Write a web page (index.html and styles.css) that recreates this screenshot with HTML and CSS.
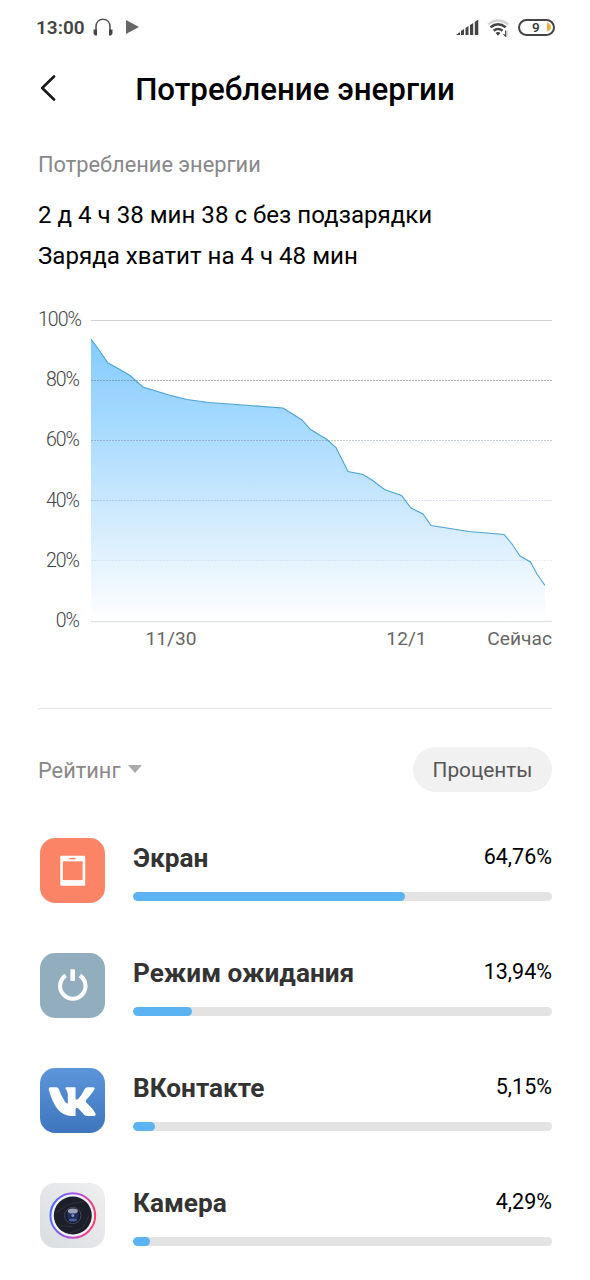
FILE: index.html
```html
<!DOCTYPE html>
<html lang="ru">
<head>
    <meta charset="UTF-8">
    <title>Потребление энергии</title>
    <link rel="stylesheet" href="styles.css">
</head>
<body>
    <div class="status-bar">
        <span class="clock">13:00</span>
        <svg class="headphones" width="20" height="18" viewBox="0 0 20 18">
            <path d="M3 15V9C3 4 6 1.200 10 1.200S17 4 17 9v6" fill="none" stroke="#555" stroke-width="1.600"/>
            <path d="M.5 11.500h3.500v6H2l-1.500-2zM19.500 11.500H16v6h2l1.500-2z" fill="#444"/>
        </svg>
        <svg class="play" width="13" height="14" viewBox="0 0 13 14">
            <path d="M0 0l13 7-13 7z" fill="#666"/>
        </svg>
        <div class="status-right">
            <svg width="24" height="17" viewBox="0 0 24 17">
                <path d="M0 16l4-3v3zM5 16v-4l3-2v6zM9.500 16V9l3-2v9zM14 16V6l3.200-2v12zM18.800 16V3L22.300 .5V16z" fill="#444"/>
            </svg>
            <svg class="wifi" width="23" height="18" viewBox="0 0 23 18">
                <path d="M1 5.500Q11 -2.500 21.500 5.500" fill="none" stroke="#d2d2d2" stroke-width="2.200"/>
                <path d="M3.500 8.300Q11 2.300 18.700 8.300M6.700 11.800Q11 8.300 15.500 11.800" fill="none" stroke="#444" stroke-width="2.500"/>
                <path d="M8.500 14Q11 12.200 13.500 14L11 16.700z" fill="#444"/>
                <path d="M18.700 11.500v5.800l-2.200-2.200" fill="none" stroke="#444" stroke-width="1.200"/>
                <path d="M20.800 17v-5.500" stroke="#ccc" stroke-width="1"/>
            </svg>
            <div class="battery">
                <span>9</span>
                <svg width="4" height="10" viewBox="0 0 4 10">
                    <path d="M0 .5Q4 2 4 5T0 9.500z" fill="#eab03c"/>
                </svg>
            </div>
        </div>
    </div>

    <header class="header">
        <svg class="back" width="16" height="26" viewBox="0 0 16 26">
            <path d="M14 1.500L2.200 13 14 24.500" fill="none" stroke="#1a1a1a" stroke-width="2.700" stroke-linecap="round" stroke-linejoin="round"/>
        </svg>
        <h1>Потребление энергии</h1>
    </header>

    <section class="summary">
        <h2>Потребление энергии</h2>
        <p>2 д 4 ч 38 мин 38 с без подзарядки</p>
        <p>Заряда хватит на 4 ч 48 мин</p>
    </section>

    <section class="chart">
        <div class="y-axis">
            <span>100%</span>
            <span>80%</span>
            <span>60%</span>
            <span>40%</span>
            <span>20%</span>
            <span>0%</span>
        </div>
        <div class="plot">
            <svg width="461" height="303" viewBox="0 0 461 303">
                <defs>
                    <linearGradient id="fill" gradientUnits="userSpaceOnUse" x1="0" y1="19" x2="0" y2="301">
                        <stop offset="0" stop-color="#83cbff"/>
                        <stop offset=".35" stop-color="#acdcff"/>
                        <stop offset=".7" stop-color="#d9eefd"/>
                        <stop offset="1" stop-color="#fff"/>
                    </linearGradient>
                </defs>
                <path d="M0 .5h461" stroke="#d2d2d2"/>
                <path d="M0 301.500h461" stroke="#e2e2e2" stroke-width="1.500"/>
                <path fill="url(#fill)" d="M0 19L8 30 17 43 28 49 39 55.500 52 67 78 75 96 79.500 118 82.500 192 88 211 100 219.500 109.500 236 119.500 245 127.500 257 151.500 272 154.500 281 160 293.500 169.500 310.500 175.500 320 188 332 194 340 205.500 378 211.500 413 214.500 421 224 429 236 439.500 242 446 254 454 265.500V301H0z"/>
                <path d="M0 60.500h461" class="grid grid-80"/>
                <path d="M0 120.500h461" class="grid grid-60"/>
                <path d="M0 180.500h461" class="grid grid-40"/>
                <path d="M0 240.500h461" class="grid grid-20"/>
                <path fill="none" stroke="#4ba3d4" stroke-width="1.100" d="M0 19L8 30 17 43 28 49 39 55.500 52 67 78 75 96 79.500 118 82.500 192 88 211 100 219.500 109.500 236 119.500 245 127.500 257 151.500 272 154.500 281 160 293.500 169.500 310.500 175.500 320 188 332 194 340 205.500 378 211.500 413 214.500 421 224 429 236 439.500 242 446 254 454 265.500"/>
            </svg>
            <div class="x-axis">
                <span>11/30</span>
                <span>12/1</span>
                <span>Сейчас</span>
            </div>
        </div>
    </section>

    <section class="rating">
        <div class="toolbar">
            <span class="sort">Рейтинг <i class="arrow"></i></span>
            <button type="button">Проценты</button>
        </div>

        <div class="app">
            <svg class="icon" viewBox="0 0 64 64">
                <rect width="64" height="64" rx="15" fill="#fb8466"/>
                <rect x="20" y="17.500" width="24.500" height="29.500" rx="1" fill="#fff"/>
                <rect x="22.500" y="23" width="19.500" height="18.500" fill="#fb8466"/>
                <path d="M29 20.300h6" stroke="#fb8466" stroke-width="1.500"/>
            </svg>
            <div class="info">
                <div class="line"><b>Экран</b><span>64,76%</span></div>
                <div class="bar"><div style="width: 65%"></div></div>
            </div>
        </div>

        <div class="app">
            <svg class="icon" viewBox="0 0 64 64">
                <rect width="64" height="64" rx="15" fill="#92adbe"/>
                <path d="M25.300 22.200A12.500 12.500 0 1 0 39.300 22.200" fill="none" stroke="#fff" stroke-width="4"/>
                <path d="M32.200 16v11.500" stroke="#fff" stroke-width="4.500"/>
            </svg>
            <div class="info">
                <div class="line"><b>Режим ожидания</b><span>13,94%</span></div>
                <div class="bar"><div style="width: 14.100%"></div></div>
            </div>
        </div>

        <div class="app">
            <svg class="icon" viewBox="0 0 64 64">
                <defs>
                    <linearGradient id="vk" x1="0" y1="0" x2="0" y2="1">
                        <stop offset="0" stop-color="#5c96da"/>
                        <stop offset="1" stop-color="#3e75bd"/>
                    </linearGradient>
                </defs>
                <rect width="64" height="64" rx="15" fill="url(#vk)"/>
                <path fill="#fff" d="M30.500 47.300H35V40.500Q36 38 38 40L43.500 46Q44.800 47.300 47 47.300H52.500Q56 47 54.200 44Q52 40 45.500 34Q44.600 33 45.500 31.500Q51.500 24.500 53.600 20.800Q54.300 18.900 52 18.900H46.800Q45 18.900 44.200 20.500Q41 27.200 37.500 30.500Q35 32 35 29.500V18.900H25.800Q24.200 19.500 25.300 20.700Q27.300 23 27.400 25.500V34.500Q26.500 36 24.500 33Q20.500 27 18.400 20.500Q17.900 18.900 16 18.900H10.300Q7.900 19.200 8.800 22Q15.800 47.300 30.500 47.300Z"/>
            </svg>
            <div class="info">
                <div class="line"><b>ВКонтакте</b><span>5,15%</span></div>
                <div class="bar"><div style="width: 5.150%"></div></div>
            </div>
        </div>

        <div class="app">
            <svg class="icon" viewBox="0 0 64 64">
                <defs>
                    <linearGradient id="body" x1="1" y1="0" x2="0" y2="1">
                        <stop offset="0" stop-color="#eeeff1"/>
                        <stop offset="1" stop-color="#dadde0"/>
                    </linearGradient>
                    <linearGradient id="ring" x1="0" y1=".4" x2="1" y2=".6">
                        <stop offset="0" stop-color="#4c6cff"/>
                        <stop offset=".5" stop-color="#b651e5"/>
                        <stop offset="1" stop-color="#fb3f68"/>
                    </linearGradient>
                    <radialGradient id="lens">
                        <stop offset="0" stop-color="#101d4c"/>
                        <stop offset=".55" stop-color="#26325a"/>
                        <stop offset="1" stop-color="#07091a"/>
                    </radialGradient>
                </defs>
                <rect width="64" height="64" rx="15" fill="url(#body)"/>
                <circle cx="32.300" cy="32" r="22" fill="#f2f3fb" stroke="url(#ring)" stroke-width="2"/>
                <circle cx="32.300" cy="32" r="18.700" fill="#1c1e29"/>
                <path d="M15 30l13-9 15-3M49 31l-7 13-14 6M20 42l12 1" fill="none" stroke="#343744" stroke-width=".8"/>
                <circle cx="32.300" cy="32" r="8" fill="url(#lens)" stroke="#53566a" stroke-width=".8"/>
                <ellipse cx="32.300" cy="27.500" rx="5" ry="2.500" fill="#9ba2b8"/>
                <ellipse cx="32.300" cy="36.500" rx="4" ry="1.500" fill="#4a5f99"/>
                <circle cx="32.300" cy="32" r="1.500" fill="#8291ca"/>
            </svg>
            <div class="info">
                <div class="line"><b>Камера</b><span>4,29%</span></div>
                <div class="bar"><div style="width: 4.100%"></div></div>
            </div>
        </div>
    </section>
</body>
</html>
```
FILE: styles.css
```css
body {
    margin: 0;
    padding: 0 38px;
    height: 1280px;
    box-sizing: border-box;
    overflow: hidden;
    background: #fff;
    color: #000;
    font-family: Roboto, sans-serif;
}
svg {
    display: block;
}
h1, h2, p {
    margin: 0;
}
.status-bar {
    display: flex;
    align-items: center;
    height: 54px;
    margin: 0 -3px 0 -2px;
}
.clock {
    width: 57px;
    color: #444;
    font-size: 19px;
    font-weight: 600;
}
.play {
    margin-left: 13px;
}
.status-right {
    display: flex;
    align-items: center;
    margin-left: auto;
}
.wifi {
    margin: 2px 8px 0 7px;
}
.battery {
    display: flex;
    align-items: center;
    justify-content: space-between;
    width: 37px;
    height: 17px;
    box-sizing: border-box;
    padding: 0 2px 0 12px;
    border: 2px solid #444;
    border-radius: 9px;
    color: #333;
    font-size: 13.500px;
    font-weight: 500;
    line-height: 13px;
}
.header {
    display: flex;
    align-items: center;
    height: 68px;
}
.header h1 {
    flex: 1;
    margin: 3px 18px 0 0;
    font-size: 31.300px;
    font-weight: 500;
    line-height: 40px;
    text-align: center;
}
.back {
    margin-left: 2px;
}
.summary {
    padding-top: 29px;
    height: 161px;
    box-sizing: border-box;
}
.summary h2 {
    margin-bottom: 16px;
    color: #888;
    font-size: 21.800px;
    font-weight: 400;
    line-height: 28px;
}
.summary p {
    font-size: 24.100px;
    line-height: 41px;
}
.chart {
    display: flex;
    justify-content: space-between;
    height: 426px;
    box-sizing: border-box;
    padding-top: 37px;
    border-bottom: 1px solid #e4e4e4;
}
.y-axis {
    width: 41px;
    margin-top: -30px;
    color: #444;
    font-size: 19.500px;
    font-weight: 300;
    letter-spacing: -1px;
    line-height: 60.200px;
    text-align: right;
    white-space: nowrap;
}
.y-axis span {
    display: block;
}
.plot {
    width: 461px;
}
.grid {
    stroke-dasharray: 2 1;
}
.grid-80 {
    stroke: rgba(100, 110, 120, 0.480);
}
.grid-60 {
    stroke: rgba(100, 120, 140, 0.400);
}
.grid-40 {
    stroke: rgba(120, 150, 180, 0.330);
}
.grid-20 {
    stroke: rgba(150, 170, 190, 0.200);
}
.x-axis {
    display: grid;
    grid-template-columns: 160px 1fr 90px;
    margin-top: 4px;
    color: #666;
    font-size: 19.200px;
    line-height: 24px;
    text-align: center;
}
.x-axis span:nth-child(2) {
    padding-left: 100px;
}
.x-axis span:last-child {
    text-align: right;
}
.toolbar {
    display: flex;
    justify-content: space-between;
    align-items: center;
    padding: 38px 0 26px;
}
.sort {
    display: flex;
    align-items: center;
    gap: 7px;
    padding-top: 2px;
    color: #888;
    font-size: 21.800px;
}
.arrow {
    margin-top: -3px;
    border: 7.500px solid transparent;
    border-top: 8px solid #aaa;
    border-bottom: 0;
}
button {
    width: 139px;
    height: 45px;
    padding: 0;
    border: 0;
    border-radius: 23px;
    background: #f1f1f1;
    color: #555;
    font: 20.800px Roboto, sans-serif;
}
.app {
    display: flex;
    align-items: center;
    height: 115px;
    margin-top: -5px;
}
.app + .app {
    margin-top: 0;
}
.icon {
    width: 65px;
    height: 65px;
    margin: 0 28px 0 2px;
}
.info {
    flex: 1;
}
.line {
    display: flex;
    justify-content: space-between;
    height: 52px;
    line-height: 33px;
}
.line b {
    color: #333;
    font-size: 26.200px;
    font-weight: 700;
    line-height: 37px;
}
.line span {
    font-size: 21.500px;
}
.bar {
    height: 9px;
    border-radius: 5px;
    background: #e3e3e3;
    overflow: hidden;
}
.bar div {
    height: 100%;
    border-radius: 5px;
    background: #5cb3f1;
}
```
